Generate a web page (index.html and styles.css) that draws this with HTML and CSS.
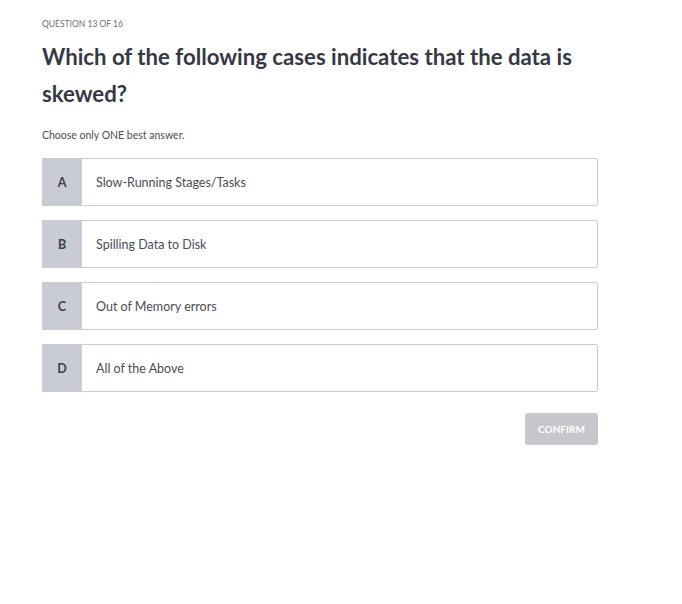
FILE: index.html
```html
<!DOCTYPE html>
<html>
<head>
<meta charset="utf-8">
<link rel="stylesheet" href="styles.css">
</head>
<body>
<main class="quiz">
  <div class="counter">QUESTION 13 OF 16</div>
  <h1 class="title">Which of the following cases indicates that the data is skewed?</h1>
  <p class="hint">Choose only ONE best answer.</p>
  <ul class="options">
    <li class="option"><span class="letter">A</span><span class="label">Slow-Running Stages/Tasks</span></li>
    <li class="option"><span class="letter">B</span><span class="label">Spilling Data to Disk</span></li>
    <li class="option"><span class="letter">C</span><span class="label">Out of Memory errors</span></li>
    <li class="option"><span class="letter">D</span><span class="label">All of the Above</span></li>
  </ul>
  <div class="actions"><button class="confirm">CONFIRM</button></div>
</main>
</body>
</html>
```
FILE: styles.css
```css
* { box-sizing: border-box; }
body {
  margin: 0;
  background: #fff;
  font-family: Lato, "Noto Sans", sans-serif;
  color: #3c3f4a;
}
.quiz {
  width: 556px;
  margin-left: 42px;
  padding-top: 18px;
}
.counter {
  font-size: 8.5px;
  color: #6b6e78;
  line-height: 12px;
}
.title {
  margin: 8px 0 0;
  font-size: 22.2px;
  font-weight: 700;
  line-height: 37px;
  color: #363944;
}
.hint {
  margin: 16px 0 0;
  font-size: 10.5px;
  line-height: 14px;
  color: #4a4d57;
}
.options {
  list-style: none;
  margin: 16px 0 0;
  padding: 0;
  display: flex;
  flex-direction: column;
  gap: 14px;
}
.option {
  display: flex;
  height: 48px;
  border: 1px solid #c9cbd3;
  border-radius: 2px;
  background: #fff;
}
.letter {
  width: 40px;
  flex: none;
  background: #c9ccd4;
  display: flex;
  align-items: center;
  justify-content: center;
  font-size: 12.5px;
  font-weight: 700;
  color: #3c3f4a;
  margin: -1px 0 -1px -1px;
}
.label {
  display: flex;
  align-items: center;
  padding-left: 14px;
  font-size: 12.5px;
  color: #4a4d57;
}
.actions {
  display: flex;
  justify-content: flex-end;
  margin-top: 21px;
}
.confirm {
  width: 73px;
  height: 32px;
  border: none;
  border-radius: 3px;
  background: #c6c7cc;
  color: #fff;
  font-family: inherit;
  font-size: 10px;
  font-weight: 700;
}
```
